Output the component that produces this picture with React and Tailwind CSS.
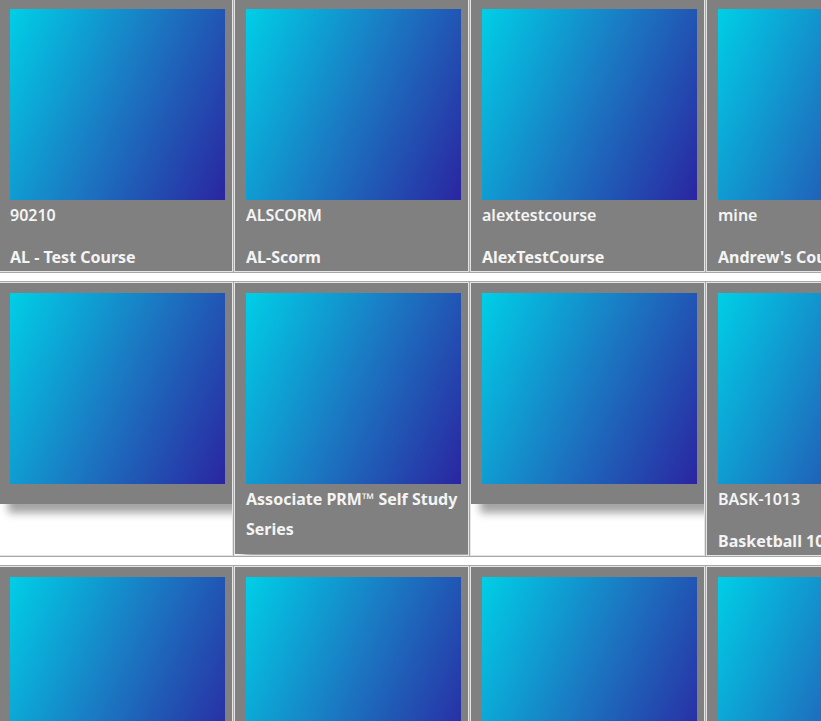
import React from "react";

const rows = [
  [
    { code: "90210", title: "AL - Test Course" },
    { code: "ALSCORM", title: "AL-Scorm" },
    { code: "alextestcourse", title: "AlexTestCourse" },
    { code: "mine", title: "Andrew's Course" },
  ],
  [
    {},
    { title: "Associate PRM™ Self Study Series" },
    {},
    { code: "BASK-1013", title: "Basketball 101" },
  ],
  [{}, {}, {}, {}],
];

function Card({ item }) {
  const empty = !item.code && !item.title;
  return (
    <div className="w-[235px] h-[274px] shrink-0 border border-[#e4e4e4] bg-white overflow-hidden">
      <div className="bg-[#808080] pl-[11px] pr-[7px] pt-[10px] pb-[10px] shadow-[9px_9px_8px_rgba(0,0,0,0.36)]">
        <div className="w-[215px] h-[191px] bg-[linear-gradient(115deg,#00cfe6_0%,#1b78c2_50%,#2a25a0_100%)]" />
        {item.code && (
          <div className="leading-[30px] mb-[12px] text-[16px] font-semibold text-[#f4f4f4] whitespace-nowrap">
            {item.code}
          </div>
        )}
        {item.title && (
          <div className="leading-[30px] text-[16px] font-bold text-[#f4f4f4]">
            {item.title}
          </div>
        )}
        {empty && <div className="h-[10px]" />}
      </div>
    </div>
  );
}

export default function App() {
  return (
    <div
      className="w-[821px] h-[721px] overflow-hidden bg-white"
      style={{ fontFamily: '"Noto Sans", "Open Sans", sans-serif' }}
    >
      <div className="-ml-[3px] -mt-[3px] flex flex-col gap-[8px]">
        {rows.map((row, i) => (
          <div key={i} className="flex w-max gap-[1px] p-[1px] bg-[#a8a8a8]">
            {row.map((item, j) => (
              <Card key={j} item={item} />
            ))}
          </div>
        ))}
      </div>
    </div>
  );
}
